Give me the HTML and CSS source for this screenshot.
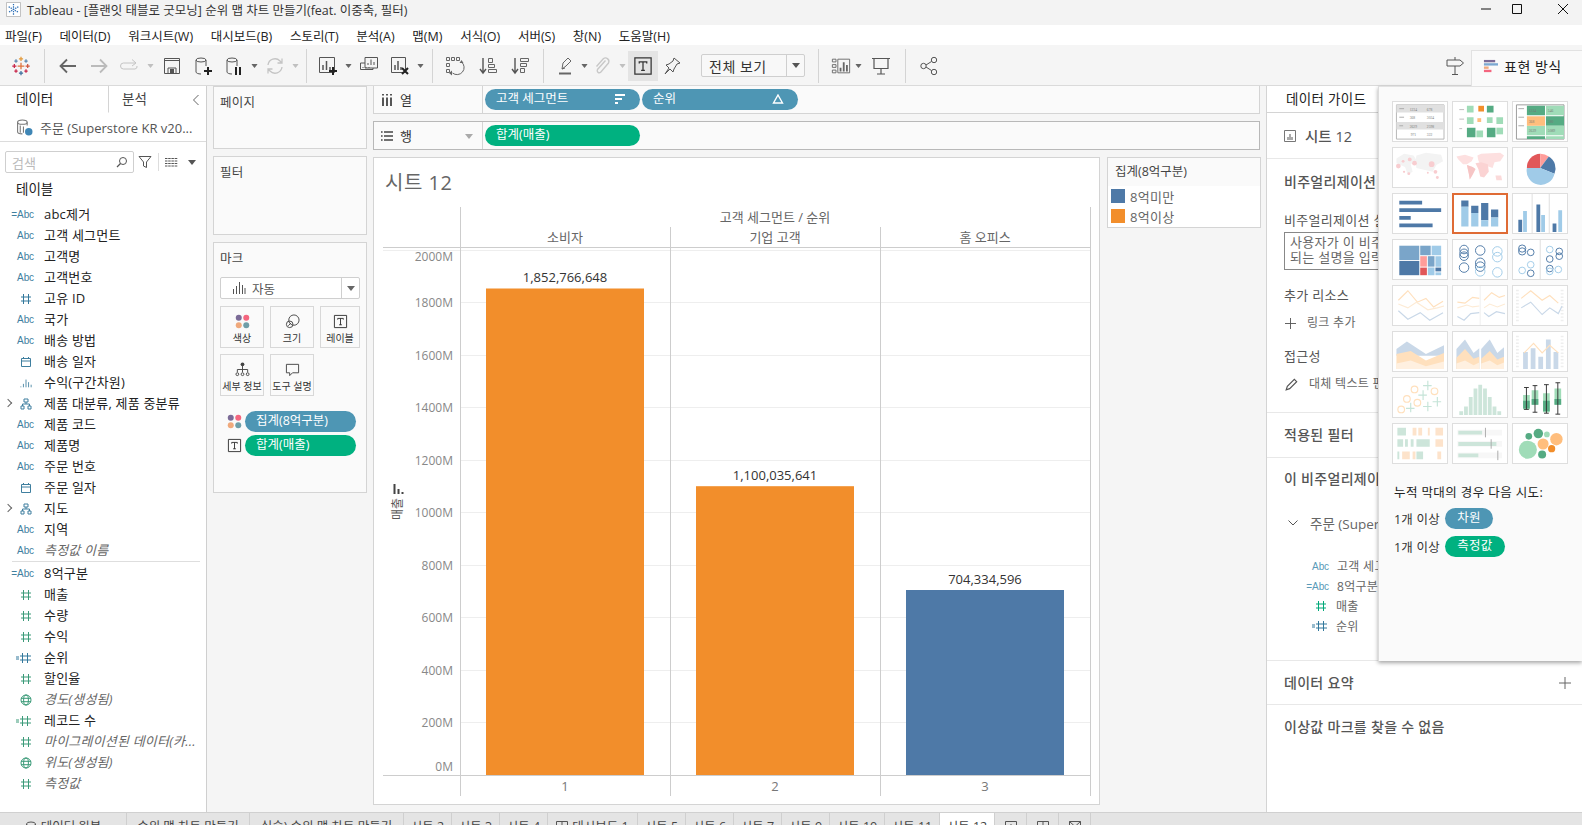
FILE: index.html
```html
<!DOCTYPE html>
<html lang="ko">
<head>
<meta charset="utf-8">
<title>Tableau</title>
<link rel="stylesheet" href="styles.css">
</head>
<body>
<svg class="defs" width="0" height="0" aria-hidden="true">
  <symbol id="i-hash" viewBox="0 0 12 12"><path d="M3.500 1v10M8.500 1v10M1 4h10M1 8h10" fill="none" stroke="currentColor" stroke-width="1"/></symbol>
  <symbol id="i-calc" viewBox="0 0 16 12"><path d="M6.500 1v10M11.500 1v10M4 4h11M4 8h11M0 5h3M0 7h3" fill="none" stroke="currentColor"/></symbol>
  <symbol id="i-cal" viewBox="0 0 12 12"><path d="M1.500 2.500h9v8h-9zM1.500 5h9M3.500 1v2M8.500 1v2" fill="none" stroke="currentColor"/></symbol>
  <symbol id="i-bin" viewBox="0 0 14 12"><path d="M1 10v1M4 7v4M7 2v9M10 5v6M13 8v3" stroke="currentColor" fill="none"/></symbol>
  <symbol id="i-hier" viewBox="0 0 12 12"><path d="M4 1h4v3H4zM1 8h3v3H1zM8 8h3v3H8zM6 4v2M2.500 8V6h7v2" fill="none" stroke="currentColor"/></symbol>
  <symbol id="i-globe" viewBox="0 0 12 12"><g fill="none" stroke="currentColor"><circle cx="6" cy="6" r="5"/><ellipse cx="6" cy="6" rx="2.400" ry="5"/><path d="M1 4.300h10M1 7.700h10"/></g></symbol>
  <symbol id="i-t" viewBox="0 0 16 16"><path d="M1.500 1.500h13v13h-13z" fill="none" stroke="currentColor"/><path d="M5 6V4.700h6V6M8 4.700v7M6.500 11.500h3" fill="none" stroke="currentColor"/></symbol>
  <symbol id="i-dots" viewBox="0 0 16 16"><circle cx="4" cy="4" r="3.200" fill="#7b6b97"/><circle cx="12" cy="4" r="3.200" fill="#f4667f"/><circle cx="4" cy="12" r="3.200" fill="#f0a97c"/><circle cx="12" cy="12" r="3.200" fill="#6f9ea8"/></symbol>
  <symbol id="i-tab" viewBox="0 0 24 24"><g fill="none" stroke-width="1.500"><path d="M12 8v8M8 12h8" stroke="#e0743c"/><path d="M12 1v5M9.500 3.500h5" stroke="#e39a3a"/><path d="M12 18v5M9.500 20.500h5" stroke="#3d6f9e"/><path d="M4 9.500v5M1.500 12h5" stroke="#c7264a"/><path d="M20 9.500v5M17.500 12h5" stroke="#d0553e"/><path d="M6 4v4M4 6h4M18 4v4M16 6h4" stroke="#5b87ad"/><path d="M6 16v4M4 18h4M18 16v4M16 18h4" stroke="#c7264a"/></g></symbol>
  <symbol id="i-car" viewBox="0 0 8 5"><path d="M0 0h8L4 5z" fill="currentColor"/></symbol>
</svg>

<header class="titlebar">
  <svg class="app-ico" viewBox="0 0 16 16"><path d="M.5.500h15v15H.5z" fill="#fff" stroke="#bcbcbc"/><path d="M8 2v12M2.800 5l10.400 6M13.200 5L2.800 11" stroke="#2a6db5" stroke-width="1.300" stroke-dasharray="1.500 1"/></svg>
  <span class="title-text">Tableau - [플랜잇 태블로 굿모닝] 순위 맵 차트 만들기(feat. 이중축, 필터)</span>
  <div class="winctl">
    <svg viewBox="0 0 12 12"><path d="M1 6h10" stroke="#111"/></svg>
    <svg viewBox="0 0 12 12"><path d="M1.500 1.500h9v9h-9z" fill="none" stroke="#111"/></svg>
    <svg viewBox="0 0 12 12"><path d="M1 1l10 10M11 1L1 11" stroke="#111"/></svg>
  </div>
</header>

<nav class="menubar">
  <span>파일(F)</span><span>데이터(D)</span><span>워크시트(W)</span><span>대시보드(B)</span><span>스토리(T)</span><span>분석(A)</span><span>맵(M)</span><span>서식(O)</span><span>서버(S)</span><span>창(N)</span><span>도움말(H)</span>
</nav>

<div class="toolbar">
  <div class="tb-logo"><svg class="ico-18" viewBox="0 0 24 24"><use href="#i-tab"/></svg></div>
  <i class="sep"></i>
  <div class="tb-group pad-7">
    <button class="tb"><svg viewBox="0 0 20 20"><path d="M18 10H3M9 3.500L2.500 10 9 16.500" fill="none" stroke="#666" stroke-width="1.800"/></svg></button>
    <button class="tb"><svg viewBox="0 0 20 20"><path d="M2 10h15M11 3.500l6.500 6.500-6.500 6.500" fill="none" stroke="#bbb" stroke-width="1.800"/></svg></button>
    <button class="tb"><svg viewBox="0 0 20 20"><path d="M15 7H3.500a2.500 2.500 0 0 0 0 6H15a2.500 2.500 0 0 0 2-3M12 3.500L16 7l-4 3" fill="none" stroke="#c4c4c4"/></svg></button>
    <span class="car light"><svg viewBox="0 0 8 5"><use href="#i-car"/></svg></span>
    <button class="tb"><svg viewBox="0 0 20 20"><path d="M2.500 2.500h15v15h-15zM2.500 4.500h15M6 17v-5h8v5" fill="none" stroke="#555"/><path d="M8 13h4v4H8z" fill="#555"/></svg></button>
    <button class="tb"><svg viewBox="0 0 20 20"><g fill="none" stroke="#555"><ellipse cx="8" cy="4" rx="5" ry="2"/><path d="M3 4v12c0 1 2 2 5 2M13 4v6"/></g><path d="M15 11v8M11 15h8" stroke="#222" stroke-width="2"/></svg></button>
    <button class="tb"><svg viewBox="0 0 20 20"><g fill="none" stroke="#555"><ellipse cx="8" cy="4" rx="5" ry="2"/><path d="M3 4v12c0 1 2 2 5 2M13 4v6"/></g><path d="M12 11v8M16 11v8" stroke="#222" stroke-width="2"/></svg></button>
    <span class="car w10"><svg viewBox="0 0 8 5"><use href="#i-car"/></svg></span>
    <button class="tb"><svg viewBox="0 0 20 20"><path d="M3 9a7 7 0 0 1 12-4l2 2M17 11a7 7 0 0 1-12 4l-2-2M17 2.500V7h-4.500M3 17.500V13h4.500" fill="none" stroke="#c4c4c4" stroke-width="1.300"/></svg></button>
    <span class="car light"><svg viewBox="0 0 8 5"><use href="#i-car"/></svg></span>
  </div>
  <i class="sep ml-5"></i>
  <div class="tb-group pad-5">
    <button class="tb"><svg viewBox="0 0 20 20"><path d="M1.500 1.500h15v15h-15z" fill="none" stroke="#555"/><path d="M5 14V9M8.500 14V5M12 14v-3" stroke="#555" stroke-width="1.500"/><path d="M15 11v8M11 15h8" stroke="#222" stroke-width="2"/></svg></button>
    <span class="car w10"><svg viewBox="0 0 8 5"><use href="#i-car"/></svg></span>
    <button class="tb"><svg viewBox="0 0 20 20"><path d="M6 1.500h12.500V12H6zM1.500 7H6M1.500 7v6.500H14V12" fill="none" stroke="#555"/><path d="M9 9V7M12 9V3.500M15 9V6M4 11v1M7 11v1M10 11v1" stroke="#555"/></svg></button>
    <button class="tb"><svg viewBox="0 0 20 20"><path d="M1.500 1.500h14v15h-14z" fill="none" stroke="#555"/><path d="M5 14V9M8 14V5M11 14v-3" stroke="#555" stroke-width="1.500"/><path d="M12 12l6 6M18 12l-6 6" stroke="#222" stroke-width="2"/></svg></button>
    <span class="car w10"><svg viewBox="0 0 8 5"><use href="#i-car"/></svg></span>
  </div>
  <i class="sep ml-7"></i>
  <div class="tb-group pad-6">
    <button class="tb"><svg viewBox="0 0 20 20"><g fill="none" stroke="#666"><path d="M1.500 1.500h3v3h-3zM6.500 1.500h3v3h-3zM11.500 1.500h3v3h-3zM1.500 7.500h3v3h-3zM1.500 13.500h3v3h-3z"/><path d="M16.500 6a7 7 0 0 1-9 11"/></g><path d="M7 14.500v5l-3-2.500zM14.500 7h4l-2-3z" fill="#666"/></svg></button>
    <button class="tb ml-2"><svg viewBox="0 0 20 20"><path d="M5 2v14M2 13l3 4 3-4" fill="none" stroke="#555" stroke-width="1.400"/><path d="M10.500 2.500h4v4h-4zM10.500 8.500h6v3h-6zM10.500 13.500h8v3h-8z" fill="none" stroke="#666"/></svg></button>
    <button class="tb ml-1"><svg viewBox="0 0 20 20"><path d="M5 2v14M2 13l3 4 3-4" fill="none" stroke="#555" stroke-width="1.400"/><path d="M10.500 2.500h8v3h-8zM10.500 7.500h6v3h-6zM10.500 12.500h4v4h-4z" fill="none" stroke="#666"/></svg></button>
  </div>
  <i class="sep ml-8"></i>
  <div class="tb-group pad-8">
    <button class="tb n"><svg viewBox="0 0 20 20"><path d="M8 13l1-6 5-5 3 3-5 5zM8 13l3-1" fill="none" stroke="#666" transform="translate(-2 0)"/><path d="M3 17.500h12" stroke="#666" stroke-width="2"/></svg></button>
    <span class="car w8"><svg viewBox="0 0 8 5"><use href="#i-car"/></svg></span>
    <button class="tb n"><svg viewBox="0 0 20 20"><path d="M13.500 3.500l-8 9a2.200 2.200 0 0 0 3 3l8-9.500a3.500 3.500 0 0 0-5-4.500l-7 8" transform="translate(0 1)" fill="none" stroke="#c8c8c8" stroke-width="1.400"/></svg></button>
    <span class="car w12 light"><svg viewBox="0 0 8 5"><use href="#i-car"/></svg></span>
    <button class="tb active"><svg viewBox="0 0 16 16"><use href="#i-t"/></svg></button>
    <button class="tb n"><svg viewBox="0 0 20 20"><path d="M12 2l6 5-3 1-3 5-1 3-3-3-5 5 4-6-3-3 3-1 4-3z" fill="none" stroke="#555"/></svg></button>
  </div>
  <div class="fit-select"><span class="fit-text">전체 보기</span><span class="fit-btn"><svg viewBox="0 0 8 5"><use href="#i-car"/></svg></span></div>
  <i class="sep ml-13"></i>
  <div class="tb-group pad-9">
    <button class="tb s"><svg viewBox="0 0 22 20"><path d="M1.500 2.500h4v3h-4zM1.500 8.500h4v3h-4zM1.500 14.500h4v3h-4zM7.500 2.500h13v15h-13z" fill="none" stroke="#666"/><path d="M10.500 16v-4M14 16V6M17.500 16V9" stroke="#666" stroke-width="2"/></svg></button>
    <span class="car w8"><svg viewBox="0 0 8 5"><use href="#i-car"/></svg></span>
    <button class="tb ml-3"><svg viewBox="0 0 20 20"><path d="M1 2.500h18M3 2.500v10h14v-10M10 12.500v5M6 18h8" fill="none" stroke="#555" stroke-width="1.200"/></svg></button>
  </div>
  <i class="sep ml-9"></i>
  <div class="tb-group pad-7">
    <button class="tb"><svg viewBox="0 0 20 20"><g fill="none" stroke="#555"><circle cx="4.500" cy="10" r="2.700"/><circle cx="15" cy="4" r="2.700"/><circle cx="15" cy="16" r="2.700"/><path d="M7 9l5.500-3.500M7 11l5.500 3.500"/></g></svg></button>
  </div>
  <div class="tb-right">
    <svg class="sign" viewBox="0 0 20 20"><path d="M10 1v3M2 4h13l3.500 3L15 10H2zM10 10v8M7 18.500h6" fill="none" stroke="#555"/></svg>
    <div class="showme-tab">
      <svg viewBox="0 0 16 16"><path d="M1 1h12v2.500H1z" fill="#7b6b97"/><path d="M1 4.500h15V7H1z" fill="#7ba8d1"/><path d="M1 8h5v2.500H1z" fill="#f0a97c"/><path d="M1 11.500h8V14H1z" fill="#f4667f"/></svg>
      <span>표현 방식</span>
    </div>
  </div>
</div>

<main class="main">
  <aside class="data-pane">
    <div class="pane-tabs">
      <div class="ptab on">데이터</div>
      <div class="ptab">분석</div>
      <svg class="collapse" viewBox="0 0 8 12"><path d="M6.500 1L1.500 6l5 5" fill="none" stroke="#666"/></svg>
    </div>
    <div class="source">
      <svg viewBox="0 0 16 16"><g fill="none" stroke="#777"><ellipse cx="6" cy="3" rx="4.500" ry="2"/><path d="M1.500 3v9c0 1 2 2 4.500 2M10.500 3v3"/><path d="M4 6v7M7 7v6"/></g><circle cx="12" cy="12" r="3.500" fill="#3f86b5"/></svg>
      <span>주문 (Superstore KR v20...</span>
    </div>
    <div class="search-row">
      <div class="search"><span>검색</span><svg viewBox="0 0 12 12"><circle cx="7" cy="5" r="3.500" fill="none" stroke="#555"/><path d="M4.500 7.500L1 11" stroke="#555" stroke-width="1.300"/></svg></div>
      <svg class="s-filter" viewBox="0 0 14 14"><path d="M1 1.500h12L8.500 7v5.500l-3-1.500V7z" fill="none" stroke="#555"/></svg>
      <i class="s-sep"></i>
      <svg class="s-list" viewBox="0 0 13 11"><path d="M0 1.500h13M0 4h13M0 6.500h13M0 9h13" stroke="#555" stroke-dasharray="2.500 .7"/></svg>
      <svg class="s-car" viewBox="0 0 8 5"><use href="#i-car"/></svg>
    </div>
    <div class="tables-h">테이블</div>
    <ul class="fields">
      <li><b class="abc">=Abc</b><span>abc제거</span></li>
      <li><b class="abc">Abc</b><span>고객 세그먼트</span></li>
      <li><b class="abc">Abc</b><span>고객명</span></li>
      <li><b class="abc">Abc</b><span>고객번호</span></li>
      <li><svg class="fi teal"><use href="#i-hash"/></svg><span>고유 ID</span></li>
      <li><b class="abc">Abc</b><span>국가</span></li>
      <li><b class="abc">Abc</b><span>배송 방법</span></li>
      <li><svg class="fi blue"><use href="#i-cal"/></svg><span>배송 일자</span></li>
      <li><svg class="fi blue"><use href="#i-bin"/></svg><span>수익(구간차원)</span></li>
      <li><em class="chev"></em><svg class="fi blue"><use href="#i-hier"/></svg><span>제품 대분류, 제품 중분류</span></li>
      <li><b class="abc">Abc</b><span>제품 코드</span></li>
      <li><b class="abc">Abc</b><span>제품명</span></li>
      <li><b class="abc">Abc</b><span>주문 번호</span></li>
      <li><svg class="fi blue"><use href="#i-cal"/></svg><span>주문 일자</span></li>
      <li><em class="chev"></em><svg class="fi blue"><use href="#i-hier"/></svg><span>지도</span></li>
      <li><b class="abc">Abc</b><span>지역</span></li>
      <li class="gen"><b class="abc">Abc</b><span>측정값 이름</span></li>
    </ul>
    <hr class="f-sep">
    <ul class="fields">
      <li><b class="abc">=Abc</b><span>8억구분</span></li>
      <li><svg class="fi green"><use href="#i-hash"/></svg><span>매출</span></li>
      <li><svg class="fi green"><use href="#i-hash"/></svg><span>수량</span></li>
      <li><svg class="fi green"><use href="#i-hash"/></svg><span>수익</span></li>
      <li><svg class="fi wide teal"><use href="#i-calc"/></svg><span>순위</span></li>
      <li><svg class="fi green"><use href="#i-hash"/></svg><span>할인율</span></li>
      <li class="gen"><svg class="fi green"><use href="#i-globe"/></svg><span>경도(생성됨)</span></li>
      <li><svg class="fi wide green"><use href="#i-calc"/></svg><span>레코드 수</span></li>
      <li class="gen"><svg class="fi green"><use href="#i-hash"/></svg><span>마이그레이션된 데이터(카...</span></li>
      <li class="gen"><svg class="fi green"><use href="#i-globe"/></svg><span>위도(생성됨)</span></li>
      <li class="gen"><svg class="fi green"><use href="#i-hash"/></svg><span>측정값</span></li>
    </ul>
  </aside>

  <section class="side-cards">
    <div class="card pages"><h3>페이지</h3></div>
    <div class="card filters"><h3>필터</h3></div>
    <div class="card marks">
      <h3>마크</h3>
      <div class="mark-type">
        <svg class="fi-gray" viewBox="0 0 14 14"><path d="M1.500 8v5M4.500 5v8M7.500 1v12M10.500 4v9M13 7v6" stroke="#555" fill="none"/></svg>
        <span>자동</span>
        <i class="mt-btn"><svg viewBox="0 0 8 5"><use href="#i-car"/></svg></i>
      </div>
      <div class="mark-btns">
        <div class="mbtn"><svg viewBox="0 0 16 16"><use href="#i-dots"/></svg><span>색상</span></div>
        <div class="mbtn"><svg viewBox="0 0 16 16"><g fill="none" stroke="#444"><circle cx="9.500" cy="6.500" r="5.500"/><circle cx="5" cy="11" r="3.500"/><path d="M3.500 12.500l3-3"/></g></svg><span>크기</span></div>
        <div class="mbtn narrow"><svg viewBox="0 0 16 16"><use href="#i-t"/></svg><span>레이블</span></div>
        <div class="mbtn"><svg viewBox="0 0 16 16"><g fill="none" stroke="#444"><path d="M8 4v4M2.500 11V8h11v3M8 8v3"/><circle cx="2.500" cy="13" r="1.500"/><circle cx="8" cy="13" r="1.500"/><circle cx="13.500" cy="13" r="1.500"/></g><circle cx="8" cy="2.500" r="2" fill="#444"/></svg><span>세부 정보</span></div>
        <div class="mbtn"><svg viewBox="0 0 16 16"><path d="M1.500 2.500h13v9H8l-3 3v-3H1.500z" fill="none" stroke="#444"/></svg><span>도구 설명</span></div>
      </div>
      <div class="mark-pill"><svg viewBox="0 0 16 16"><use href="#i-dots"/></svg><span class="pill blue-p">집계(8억구분)</span></div>
      <div class="mark-pill"><svg viewBox="0 0 16 16"><use href="#i-t"/></svg><span class="pill green-p">합계(매출)</span></div>
    </div>
  </section>

  <section class="center">
    <div class="shelf">
      <div class="shelf-label"><svg class="sh-ico" viewBox="0 0 12 12"><path d="M2 0v1.500M2 3.500V12M6 0v1.500M6 3.500V12M10 0v1.500M10 3.500V12" stroke="#444" stroke-width="1.800"/></svg><span>열</span></div>
      <div class="shelf-pills">
        <span class="pill blue-p pw-155"><span>고객 세그먼트</span><svg class="pill-ico" viewBox="0 0 12 10"><path d="M1 1h10M1 5h7M1 9h3" stroke="#fff" stroke-width="2"/></svg></span>
        <span class="pill blue-p pw-156"><span>순위</span><svg class="pill-ico" viewBox="0 0 12 10"><path d="M6 1l4.500 8h-9z" fill="none" stroke="#fff" stroke-width="1.400"/></svg></span>
      </div>
    </div>
    <div class="shelf rows">
      <div class="shelf-label"><svg class="sh-ico" viewBox="0 0 12 12"><path d="M0 2h1.600M3 2h9M0 6h1.600M3 6h9M0 10h1.600M3 10h9" stroke="#444" stroke-width="1.400"/></svg><span>행</span><svg class="sh-car" viewBox="0 0 8 5"><use href="#i-car"/></svg></div>
      <div class="shelf-pills"><span class="pill green-p pw-155"><span>합계(매출)</span></span></div>
    </div>
    <div class="work">
      <div class="view">
        <svg class="chart" viewBox="374 158 725 647" width="725" height="647">
          <text class="c-title" x="385" y="190">시트 12</text>
          <g class="grid">
            <path d="M383 250.500H1090M461 302.500H1090M461 355.500H1090M461 407.500H1090M461 460.500H1090M461 512.500H1090M461 565.500H1090M461 617.500H1090M461 670.500H1090M461 722.500H1090"/>
          </g>
          <g class="rules">
            <path d="M460.500 207V796M670.500 227V796M880.500 227V796M1090.500 207V796M383 247.500H1090.500M383 775.500H1090.500"/>
          </g>
          <rect x="486" y="288.500" width="158" height="486.500" fill="#f28e2b"/>
          <rect x="696" y="486.200" width="158" height="288.800" fill="#f28e2b"/>
          <rect x="906" y="590" width="158" height="185" fill="#4e79a7"/>
          <g class="c-val">
            <text x="565" y="282">1,852,766,648</text>
            <text x="775" y="480">1,100,035,641</text>
            <text x="985" y="584">704,334,596</text>
          </g>
          <g class="c-head">
            <text x="775" y="222">고객 세그먼트 / 순위</text>
            <text x="565" y="242">소비자</text>
            <text x="775" y="242">기업 고객</text>
            <text x="985" y="242">홈 오피스</text>
          </g>
          <g class="c-axis">
            <text x="453" y="261">2000M</text>
            <text x="453" y="307">1800M</text>
            <text x="453" y="360">1600M</text>
            <text x="453" y="412">1400M</text>
            <text x="453" y="465">1200M</text>
            <text x="453" y="517">1000M</text>
            <text x="453" y="570">800M</text>
            <text x="453" y="622">600M</text>
            <text x="453" y="675">400M</text>
            <text x="453" y="727">200M</text>
            <text x="453" y="771">0M</text>
          </g>
          <g class="c-num">
            <text x="565" y="791">1</text>
            <text x="775" y="791">2</text>
            <text x="985" y="791">3</text>
          </g>
          <path d="M394.500 484v10M398.500 489v5M402.500 492v2" stroke="#444" stroke-width="2"/>
          <text class="c-ytitle" transform="translate(402 520) rotate(-90)">매출</text>
        </svg>
      </div>
      <div class="legend">
        <div class="lg-head">집계(8억구분)</div>
        <div class="lg-row"><i class="sw s-blue"></i><span>8억미만</span></div>
        <div class="lg-row"><i class="sw s-orange"></i><span>8억이상</span></div>
      </div>
    </div>
  </section>

  <aside class="guide">
    <div class="g-tab">데이터 가이드</div>
    <div class="g-sheet"><svg viewBox="0 0 12 12"><path d="M.5.500h11v11H.5z" fill="none" stroke="#777"/><path d="M3 10V7h2V4h2v3h2v3z" fill="#aaa"/></svg><span>시트 12</span></div>
    <div class="g-sec viz">
      <h4>비주얼리제이션 설명</h4>
      <div class="g-label">비주얼리제이션 설명</div>
      <div class="g-area">사용자가 이 비주얼리제이션을 이해하는 데 도움이<br>되는 설명을 입력하세요</div>
      <div class="g-label mt-14">추가 리소스</div>
      <div class="g-link"><svg viewBox="0 0 12 12"><path d="M6 0v12M0 6h12" stroke="#555"/></svg><span>링크 추가</span></div>
      <div class="g-label mt-13">접근성</div>
      <div class="g-link"><svg class="big" viewBox="0 0 12 12"><path d="M1 11l1-3 6-6 2 2-6 6z" fill="none" stroke="#555"/></svg><span>대체 텍스트 편집</span></div>
    </div>
    <div class="g-sec single"><h4>적용된 필터</h4></div>
    <div class="g-sec used">
      <h4>이 비주얼리제이션에 사용된 데이터</h4>
      <div class="g-src"><svg viewBox="0 0 10 6"><path d="M.5.500L5 5 9.500.500" fill="none" stroke="#555"/></svg><span>주문 (Superstore KR v20...</span></div>
      <ul class="g-fields">
        <li><b class="abc">Abc</b><span>고객 세그먼트</span></li>
        <li><b class="abc">=Abc</b><span>8억구분</span></li>
        <li><svg class="fi g2"><use href="#i-hash"/></svg><span>매출</span></li>
        <li><svg class="fi wide teal"><use href="#i-calc"/></svg><span>순위</span></li>
      </ul>
    </div>
    <div class="g-sec single flexed"><h4>데이터 요약</h4><svg viewBox="0 0 12 12"><path d="M6 0v12M0 6h12" stroke="#666"/></svg></div>
    <div class="g-sec last"><h4>이상값 마크를 찾을 수 없음</h4></div>
  </aside>

  <div class="showme">
    <div class="sm-grid">
      <svg class="th" viewBox="0 0 55 41"><path d="M3 3h50v36H3z" fill="#fff" stroke="#b5b5b5"/><path d="M3 3h50v8H3zM3 21h50v8H3z" fill="#e0e0e0"/><path d="M6 7h5M6 16h5M6 25h4" stroke="#aaa"/><g class="tiny"><text x="17" y="9">1234</text><text x="35" y="9">678</text><text x="17" y="18">368</text><text x="35" y="18">3034</text><text x="17" y="27">2629</text><text x="35" y="27">2598</text><text x="18" y="36">971</text><text x="35" y="36">322</text></g></svg>
      <svg class="th" viewBox="0 0 55 41"><path d="M6 8h5M6 18h5M6 28h3" stroke="#bbb"/><path d="M14 4h7v7h-7zM38 5h3v3h-3zM14 16h7v7h-7zM35 16h6v6h-6zM45 16h7v7h-7zM24 30h7v7h-7z" fill="#a0dcb8"/><path d="M26 4h6v6h-6z" fill="#f28e2b"/><path d="M35 4h7v7h-7zM14 27h9v10h-9zM35 27h9v10h-9z" fill="#55ab83"/><path d="M25 17h4v4h-4z" fill="#ffbe7d"/><path d="M45 27h7v7h-7z" fill="#a0dcb8"/></svg>
      <svg class="th" viewBox="0 0 55 41"><path d="M3 3h50v36H3z" fill="#fff" stroke="#999"/><path d="M5 7h6M5 16h6M5 25h6" stroke="#aaa"/><path d="M14 4h19v10H14zM34 15h19v10H34zM14 36h19v3H14z" fill="#55ab83"/><path d="M34 4h19v10H34zM14 25h19v10H14zM34 25h19v10H34zM34 36h19v3H34z" fill="#a0dcb8"/><path d="M14 15h19v10H14z" fill="#ffbe7d"/><g class="tiny"><text x="16" y="11">1234</text><text x="36" y="11">546</text><text x="16" y="22">368</text><text x="36" y="22">380</text><text x="16" y="32">2629</text><text x="36" y="32">5089</text></g></svg>
      <svg class="th" viewBox="0 0 55 41"><path d="M3 11l8-5 10 2 3 5-6 4 2 8-5 3-3-8-9-4zM24 8l10-3 16 2 2 7-7 4-4 7-8-2-9-2-1-7z" fill="#f3f3f3"/><g fill="#f8cdd0"><circle cx="5" cy="19" r="2.500"/><circle cx="10" cy="14" r="1.500"/><circle cx="17" cy="12" r="2"/><circle cx="22" cy="16" r="2.500"/><circle cx="11" cy="25" r="1.200"/><circle cx="40" cy="17" r="3"/><circle cx="44" cy="25" r="2"/><circle cx="46" cy="31" r="1.500"/><circle cx="16" cy="27" r="1.500"/><circle cx="36" cy="26" r="1"/></g></svg>
      <svg class="th" viewBox="0 0 55 41"><path d="M3 9l9-2 9 3-2 4-5 3-4 0-5-5zM14 18l6 2 3 2-3 6-3 5-1-6zM25 8l4-2 20-1 4 3-4 6-6 1-2 6-6-2-7-1-2-5z" fill="#fde0e0"/><path d="M23 16l6-1 7 2 1 8-5 6-4-1-2-8z" fill="#fbd3d3"/><path d="M44 29h6l1 5-6 0z" fill="#fbdada"/><path d="M14 18l6 2 3 2-3 6-3 5-1-6z" fill="#f6c5c5"/></svg>
      <svg class="th" viewBox="0 0 55 41"><path d="M28 21V6A14.500 14.500 0 0 0 14 21z" fill="#e15759"/><path d="M28 6a14.500 14.500 0 0 1 9 3L28 21z" fill="#ff9d9a"/><path d="M37 9a14.500 14.500 0 0 1 6 18L28 21z" fill="#4e79a7"/><path d="M43 27A14.500 14.500 0 0 1 14 21h14z" fill="#a0cbe8"/></svg>
      <svg class="th" viewBox="0 0 55 41"><path d="M6 7h24v4H6zM6 15h44v4H6zM6 23h12v4H6zM6 31h35v4H6z" fill="#4e79a7"/></svg>
      <svg class="th sel" viewBox="0 0 55 41"><path d="M7 6h8v7H7zM18 12h8v8h-8zM29 9h8v19h-8zM40 16h8v9h-8z" fill="#4e79a7"/><path d="M7 13h8v22H7zM18 20h8v15h-8zM29 28h8v7h-8zM40 25h8v10h-8z" fill="#a0cbe8"/></svg>
      <svg class="th" viewBox="0 0 55 41"><path d="M19.500 0v41M37.500 0v41" stroke="#ddd"/><path d="M5 27h4v13H5zM24 11h4v29h-4zM41 31h4v9h-4z" fill="#4e79a7"/><path d="M10 18h4v22h-4zM29 22h4v18h-4zM47 17h4v23h-4z" fill="#a0cbe8"/></svg>
      <svg class="th" viewBox="0 0 55 41"><path d="M6 6h21v15H6z" fill="#7aa5c9"/><path d="M28 6h11v10H28z" fill="#7aa5c9"/><path d="M40 6h10v10H40z" fill="#a0cbe8"/><path d="M6 22h21v15H6z" fill="#4e79a7"/><path d="M28 17h7v11h-7z" fill="#ff9d9a"/><path d="M36 17h7v11h-7z" fill="#7aa5c9"/><path d="M44 17h6v11h-6zM36 29h7v8h-7z" fill="#a0cbe8"/><path d="M28 29h7v8h-7z" fill="#e15759"/><path d="M44 29h6v4h-6z" fill="#4e79a7"/><path d="M44 34h6v3h-6z" fill="#a0cbe8"/></svg>
      <svg class="th" viewBox="0 0 55 41"><g fill="none" stroke="#4e79a7" stroke-width="1"><circle cx="11" cy="10" r="4.500"/><circle cx="11" cy="14" r="4.500"/><circle cx="11" cy="17" r="4.500"/><circle cx="28" cy="11" r="5"/><circle cx="11" cy="29" r="5"/><circle cx="28" cy="24" r="5"/><circle cx="28" cy="28" r="5"/></g><g fill="none" stroke="#a0cbe8" stroke-width="1"><circle cx="46" cy="12" r="5"/><circle cx="46" cy="18" r="5"/><circle cx="28" cy="33" r="5"/><circle cx="46" cy="34" r="5"/></g></svg>
      <svg class="th" viewBox="0 0 55 41"><path d="M28 0v41" stroke="#ddd"/><g fill="none" stroke="#4e79a7"><circle cx="9" cy="9" r="3.800"/><circle cx="9" cy="12" r="3.800"/><circle cx="18" cy="13" r="3.500"/><circle cx="18" cy="35" r="3.500"/><circle cx="38" cy="20" r="3.500"/><circle cx="48" cy="12" r="3.500"/><circle cx="48" cy="17" r="3.500"/><circle cx="38" cy="30" r="3.500"/></g><g fill="none" stroke="#a0cbe8"><circle cx="9" cy="32" r="3.500"/><circle cx="18" cy="26" r="3.500"/><circle cx="38" cy="10" r="3.500"/><circle cx="38" cy="33" r="3.500"/><circle cx="47" cy="31" r="3.500"/></g></svg>

      <svg class="th" viewBox="0 0 55 41"><g fill="none" stroke-width="1.200"><path d="M5 15l10-10 10 12 9-4 8 9 10-6" stroke="#ffe0bd"/><path d="M5 19l10 4 9-6 12 8 10-2 7-2" stroke="#fdebd5"/><path d="M5 26l10 9 13-7 10 8 14-8" stroke="#c9d8e8"/></g></svg>
      <svg class="th" viewBox="0 0 55 41"><path d="M28 0v41" stroke="#eee"/><g fill="none" stroke-width="1.200"><path d="M4 17l8 1 8-6 7 1M32 15l8-8 8 5 6-2" stroke="#ffe0bd"/><path d="M4 23l10-3 6 2 7-1M32 23l6-4 8 3 8-3" stroke="#fdebd5"/><path d="M4 32l7 4 7-7 9-1M32 28l5 4 8-5 9 2" stroke="#c9d8e8"/></g></svg>
      <svg class="th" viewBox="0 0 55 41"><path d="M51 4v34M4 4v34" stroke="#eee" stroke-dasharray="1.500 2" stroke-width="3"/><g fill="none" stroke-width="1.200"><path d="M8 13l10-8 12 10 8-5 9 8" stroke="#ffe0bd"/><path d="M8 23l10-6 12 13 8-7 9 6 4-8" stroke="#c9d8e8"/></g></svg>
      <svg class="th" viewBox="0 0 55 41"><path d="M3 18l11-8 20 13 19-9v11H3z" fill="#c9d8e8"/><path d="M3 23l15-3 16 10 19-8v17H3z" fill="#ffe0bd"/><path d="M3 33l15-3 16 6 19-5v8H3z" fill="#fff0e0"/></svg>
      <svg class="th" viewBox="0 0 55 41"><path d="M3 18l9-10 9 14 6-5v22H3zM29 18l9-10 8 14 7-6v23H29z" fill="#c9d8e8"/><path d="M3 27l9-9 9 10 6-2v13H3zM29 28l9-8 8 9 7-3v13H29z" fill="#ffe0bd"/><path d="M3 33l9-3 9 5 6-3v7H3zM29 33l9-3 8 5 7-3v7H29z" fill="#fff0e0"/></svg>
      <svg class="th" viewBox="0 0 55 41"><path d="M51 4v34M4 4v34" stroke="#eee" stroke-dasharray="1.500 2" stroke-width="3"/><path d="M10 21h5v18h-5zM18 17h5v22h-5zM26 26h5v13h-5zM34 8h5v31h-5zM42 21h5v18h-5z" fill="#c9d8e8"/><path d="M11 22l10-10 9 10 8-8 9 8" fill="none" stroke="#ffe0bd" stroke-width="1.200"/></svg>
      <svg class="th" viewBox="0 0 55 41"><g fill="none" stroke="#ffe0bd" stroke-width="1.200"><circle cx="22" cy="12" r="3.500"/><circle cx="14" cy="22" r="3.500"/><circle cx="8" cy="33" r="3.500"/><circle cx="25" cy="26" r="3.500"/><circle cx="43" cy="14" r="3.500"/></g><path d="M36 3v10M31 8h9M31 13v10M26 18h9M18 26v10M13 32h9M36 25v10M31 30h9M46 20v10M41 25h9" stroke="#c5e4d8" stroke-width="1.200"/></svg>
      <svg class="th" viewBox="0 0 55 41"><path d="M6 35h4v4H6zM11 30h4v9h-4zM16 20h4v19h-4zM21 11h4v28h-4zM26 7h4v32h-4zM31 11h4v28h-4zM36 20h4v19h-4zM41 30h4v9h-4zM46 35h4v4h-4z" fill="#cde5da"/></svg>
      <svg class="th" viewBox="0 0 55 41"><path d="M10 18h7v15h-7zM19 13h7v15h-7zM31 16h7v20h-7zM43 11h7v17h-7z" fill="#a0dcb8"/><path d="M10 24h7v8h-7zM19 22h7v6h-7zM31 24h7v11h-7zM43 22h7v6h-7z" fill="#55ab83"/><path d="M13.500 10v23M11 10h5M11 33h5M22.500 8v28M20 8h5M20 36h5M34.500 7v30M32 7h5M32 37h5M46.500 5v33M44 5h5M44 38h5" fill="none" stroke="#333" stroke-width="1"/></svg>
      <svg class="th" viewBox="0 0 55 41"><path d="M4 4h9v8H4zM4 16h6v8H4zM12 16h3v8h-3zM18 16h3v8h-3zM4 29h2v8H4zM24 29h7v8h-7zM24 16h14v8H24z" fill="#cde5da"/><path d="M20 4h4v8h-4zM26 4h4v8h-4zM36 4h2v8h-2zM44 4h8v8h-8zM44 16h8v8h-8zM9 29h8v8H9zM20 29h3v8h-3zM46 29h4v8h-4z" fill="#fde3cb"/></svg>
      <svg class="th" viewBox="0 0 55 41"><path d="M4 6h47v6H4zM4 18h47v6H4zM4 30h47v6H4z" fill="#f7f7f7"/><path d="M5 7h25v4H5zM5 19h40v4H5zM5 31h21v4H5z" fill="#cde5da"/><path d="M33.500 4v10M39.500 16v10M46.500 28v10" stroke="#aaa" stroke-width="1"/></svg>
      <svg class="th" viewBox="0 0 55 41"><circle cx="15" cy="27" r="9.500" fill="#a0dcb8"/><circle cx="16" cy="13" r="3.500" fill="#55ab83"/><circle cx="26" cy="10" r="5" fill="#55ab83"/><circle cx="35" cy="11" r="3" fill="#a0dcb8"/><circle cx="45" cy="16" r="6.500" fill="#ffbe7d"/><circle cx="31" cy="21" r="5.800" fill="#ffbe7d"/><circle cx="40" cy="26" r="3.800" fill="#f28e2b"/><circle cx="30" cy="32" r="4.200" fill="#55ab83"/></svg>
    </div>
    <div class="sm-hint">누적 막대의 경우 다음 시도:</div>
    <div class="sm-req"><span>1개 이상</span><span class="pill blue-p sm-pill w48">차원</span></div>
    <div class="sm-req"><span>1개 이상</span><span class="pill green-p sm-pill w60">측정값</span></div>
  </div>
</main>

<footer class="tabbar">
  <div class="tab t-src"><svg viewBox="0 0 12 12"><ellipse cx="6" cy="3" rx="4.500" ry="2" fill="none" stroke="#555"/><path d="M1.500 3v8M10.500 3v8" stroke="#555"/></svg>데이터 원본</div>
  <div class="tab t-a">순위 맵 차트 만들기</div>
  <div class="tab t-b">실습) 순위 맵 차트 만들기</div>
  <div class="tab t-n">시트 2</div>
  <div class="tab t-n">시트 3</div>
  <div class="tab t-n">시트 4</div>
  <div class="tab t-d"><svg viewBox="0 0 12 12"><path d="M.5.500h11v11H.5zM.5 5h11M6 .500V11" fill="none" stroke="#555"/></svg>대시보드 1</div>
  <div class="tab t-n">시트 5</div>
  <div class="tab t-n">시트 6</div>
  <div class="tab t-n">시트 7</div>
  <div class="tab t-n">시트 9</div>
  <div class="tab t-m">시트 10</div>
  <div class="tab t-m">시트 11</div>
  <div class="tab t-m on">시트 12</div>
  <div class="tab t-i"><svg viewBox="0 0 12 12"><path d="M.5.500h11v11H.5zM6 3v6" fill="none" stroke="#555"/></svg></div>
  <div class="tab t-i"><svg viewBox="0 0 12 12"><path d="M.5.500h11v11H.5zM.5 5h11M6 .500V11" fill="none" stroke="#555"/></svg></div>
  <div class="tab t-i"><svg viewBox="0 0 12 12"><path d="M.5.500h11v11H.5zM.5.500l5.500 5 5.500-5" fill="none" stroke="#555"/></svg></div>
</footer>
</body>
</html>
```

FILE: styles.css
```css
* { box-sizing: border-box; }
html, body { margin: 0; height: 100%; }
body {
  width: 1582px; height: 825px; overflow: hidden;
  display: flex; flex-direction: column;
  font-family: "Open Sans", "Noto Sans CJK KR", sans-serif;
  font-size: 13px; color: #222; background: #f5f5f5;
}
ul { list-style: none; margin: 0; padding: 0; }
h3, h4 { margin: 0; font-weight: 400; }
button { border: 0; background: none; padding: 0; font: inherit; }
.defs { position: absolute; }

/* title + menu */
.titlebar { height: 25px; flex: none; background: #f3f3f3; display: flex; align-items: center; padding: 0 0 7px 6px; }
.app-ico { width: 15px; height: 15px; margin-right: 6px; }
.title-text { font-size: 12.500px; color: #333; }
.winctl { margin-left: auto; display: flex; }
.winctl svg { width: 12px; height: 12px; margin: 0 13px 0 20px; display: block; }
.winctl svg:nth-child(1) { margin-right: 19px; }
.winctl svg:nth-child(2) { margin-right: 17px; margin-left: 0; }
.winctl svg:nth-child(3) { margin-left: 17px; }
.menubar { height: 20px; flex: none; background: #fff; display: flex; align-items: center; padding-left: 5px; gap: 17.700px; font-size: 12.500px; color: #222; }

/* toolbar */
.toolbar { height: 41px; flex: none; background: #f5f5f5; display: flex; align-items: center; position: relative; border-bottom: 1px solid #dadada; padding-top: 1px; }
.tb-logo { width: 44px; display: flex; justify-content: center; padding-right: 3px; }
.ico-18 { width: 20px; height: 20px; }
.sep { display: block; width: 1px; height: 34px; background: #d4d4d4; flex: none; }
.tb-group { display: flex; align-items: center; height: 30px; }
.pad-5 { padding-left: 5px; } .pad-6 { padding-left: 6px; } .pad-7 { padding-left: 7px; } .pad-8 { padding-left: 8px; } .pad-9 { padding-left: 9px; }
.ml-1 { margin-left: 1px; } .ml-2 { margin-left: 2px; } .ml-3 { margin-left: 3px; } .ml-5 { margin-left: 5px; } .ml-7 { margin-left: 7px; } .ml-8 { margin-left: 8px; } .ml-9 { margin-left: 9px; } .ml-13 { margin-left: 13px; }
.tb { width: 31px; height: 30px; display: flex; align-items: center; justify-content: center; flex: none; color: #333; }
.tb.n { width: 28px; } .tb.s { width: 26px; }
.tb svg { width: 20px; height: 20px; }
.tb.active { width: 30px; background: #e4e4e4; }
.car { width: 11px; display: flex; justify-content: center; color: #666; flex: none; }
.car.light { color: #c0c0c0; }
.car.w8 { width: 8px; } .car.w10 { width: 10px; } .car.w12 { width: 12px; }
.car svg { width: 7px; height: 4px; }
.fit-select { margin-left: 15px; width: 104px; height: 23px; border: 1px solid #cfcfcf; border-radius: 2px; background: #f8f8f8; display: flex; align-items: center; flex: none; }
.fit-text { flex: 1; padding-left: 7px; font-size: 14px; color: #333; letter-spacing: .5px; }
.fit-btn { width: 18px; height: 100%; border-left: 1px solid #cfcfcf; display: flex; align-items: center; justify-content: center; color: #555; }
.fit-btn svg { width: 8px; height: 5px; }
.tb-right { margin-left: auto; display: flex; align-items: flex-end; height: 100%; }
.sign { width: 20px; height: 20px; margin: 0 6px 9px 0; align-self: flex-end; }
.showme-tab { width: 111px; height: 36px; background: #fafafa; border: 1px solid #e2e2e2; border-bottom: 0; border-right: 0; display: flex; align-items: center; padding: 0 0 5px 11px; gap: 6px; margin-bottom: -1px; position: relative; z-index: 3; font-size: 14px; color: #222; letter-spacing: .5px; }
.showme-tab svg { width: 15px; height: 15px; }

/* main */
.main { flex: 1; min-height: 0; display: flex; position: relative; }

.data-pane { width: 207px; flex: none; background: #fff; border-right: 1px solid #cfcfcf; }
.pane-tabs { display: flex; height: 27px; position: relative; border-bottom: 1px solid #d4d4d4; }
.ptab { height: 27px; line-height: 26px; font-size: 13.500px; padding-left: 16px; width: 109px; background: #fff; color: #222; }
.ptab.on { border-bottom: 1px solid #fff; border-right: 1px solid #d4d4d4; }
.ptab:nth-child(2) { padding-left: 13px; width: 97px; color: #444; }
.collapse { position: absolute; left: 192px; top: 8px; width: 8px; height: 12px; }
.source { height: 29px; display: flex; align-items: center; padding-left: 16px; border-bottom: 1px solid #dcdcdc; color: #555; font-size: 13px; }
.source svg { width: 17px; height: 17px; margin-right: 7px; }
.search-row { display: flex; align-items: center; padding: 9px 0 0 5px; }
.search { width: 129px; height: 22px; border: 1px solid #cfcfcf; border-radius: 2px; display: flex; align-items: center; justify-content: space-between; padding: 0 5px 0 6px; color: #bbb; font-size: 13px; }
.search svg { width: 12px; height: 12px; }
.s-filter { width: 14px; height: 14px; margin-left: 4px; }
.s-sep { width: 1px; height: 18px; background: #ddd; margin: 0 6px; }
.s-list { width: 13px; height: 11px; }
.s-car { width: 8px; height: 5px; margin-left: 10px; color: #555; }
.tables-h { height: 31px; line-height: 33px; padding-left: 16px; font-size: 13.500px; color: #222; }
.fields li { height: 21px; display: flex; align-items: center; padding-left: 14px; position: relative; white-space: nowrap; font-size: 13px; color: #222; letter-spacing: .2px; }
.fields li > span { position: absolute; left: 44px; top: 0; line-height: 20px; }
.fields li.gen > span { font-style: italic; color: #666; }
.abc { width: 20px; display: flex; justify-content: flex-end; font-weight: 400; font-size: 10px; letter-spacing: -.1px; color: #3f7f9f; font-family: "Liberation Sans", sans-serif; white-space: nowrap; }
.fi { width: 12px; height: 12px; margin-left: 6px; display: block; }
.fi.wide { width: 16px; margin-left: 2px; }
.teal { color: #33789c; } .blue { color: #3f7f9f; } .green { color: #3a9a78; } .g2 { color: #00a878; }
.chev { position: absolute; left: 5px; top: 7px; width: 6px; height: 6px; border-top: 1px solid #666; border-right: 1px solid #666; transform: rotate(45deg); }
.f-sep { border: 0; height: 1px; background: #dedede; margin: 0 6px 1px 12px; }

.side-cards { width: 154px; margin-left: 6px; flex: none; display: flex; flex-direction: column; gap: 7px; }
.card { background: #fafafa; border: 1px solid #d4d4d4; padding: 8px 6px; }
.card h3 { font-size: 12.500px; color: #444; line-height: 16px; letter-spacing: .3px; }
.pages { height: 63px; } .filters { height: 79px; }
.marks { height: 251px; padding-top: 8px; }
.mark-type { margin-top: 10px; height: 22px; width: 140px; border: 1px solid #cfcfcf; border-radius: 2px; background: #fff; display: flex; align-items: center; padding-left: 11px; font-size: 12.500px; color: #555; }
.fi-gray { width: 14px; height: 14px; margin-right: 6px; }
.mt-btn { margin-left: auto; width: 18px; height: 100%; border-left: 1px solid #cfcfcf; display: flex; align-items: center; justify-content: center; color: #666; }
.mt-btn svg { width: 8px; height: 5px; }
.mark-btns { display: flex; flex-wrap: wrap; gap: 6px; margin-top: 7px; width: 142px; }
.mbtn { width: 44px; height: 42px; border: 1px solid #d8d8d8; background: #fafafa; display: flex; flex-direction: column; align-items: center; padding-top: 7px; font-size: 10px; line-height: 13px; color: #333; white-space: nowrap; }
.mbtn.narrow { width: 40px; }
.mbtn svg { width: 15px; height: 15px; margin-bottom: 3px; flex: none; }
.mark-pill { display: flex; align-items: center; margin-top: 3px; padding-left: 7px; }
.mark-btns + .mark-pill { margin-top: 15px; }
.mark-pill svg { width: 15px; height: 15px; margin-right: 3px; color: #333; }
.mark-pill .pill { width: 111px; }

.pill { height: 21px; border-radius: 11px; color: #fff; font-size: 12.500px; line-height: 17px; padding: 0 11px 2px; display: flex; align-items: center; justify-content: space-between; white-space: nowrap; flex: none; }
.blue-p { background: #4e96b4; } .green-p { background: #00b180; }
.pw-155 { width: 155px; } .pw-156 { width: 156px; }
.pill-ico { width: 12px; height: 10px; margin-right: 3px; }

.center { width: 887px; flex: none; margin-left: 6px; display: flex; flex-direction: column; }
.shelf { height: 28px; display: flex; flex: none; background: #fafafa; border: 1px solid #d4d4d4; border-top: 0; }
.shelf.rows { height: 29px; margin-top: 7px; border: 1px solid #b8b8b8; }
.shelf-label { width: 109px; flex: none; border-right: 1px solid #d4d4d4; display: flex; align-items: center; padding-left: 7px; position: relative; font-size: 13px; color: #333; background: #fafafa; }
.sh-ico { width: 12px; height: 12px; margin-right: 7px; }
.sh-car { position: absolute; right: 9px; top: 12px; width: 8px; height: 5px; color: #aaa; }
.shelf-pills { display: flex; align-items: center; gap: 2px; padding-left: 2px; }
.work { display: flex; gap: 7px; margin-top: 7px; flex: 1; min-height: 0; padding-bottom: 7px; }
.view { width: 727px; flex: none; background: #fff; border: 1px solid #d4d4d4; }
.chart { display: block; }
.grid path { stroke: #eee; fill: none; }
.rules path { stroke: #cdcdcd; fill: none; }
.c-title { font-size: 20px; fill: #666; letter-spacing: .5px; }
.c-val text { font-size: 13px; fill: #333; text-anchor: middle; }
.c-head text { font-size: 13px; fill: #666; text-anchor: middle; }
.c-axis text { font-size: 12px; fill: #888; text-anchor: end; }
.c-num text { font-size: 13px; fill: #777; text-anchor: middle; }
.c-ytitle { font-size: 12px; fill: #555; }
.legend { width: 154px; height: 71px; flex: none; background: #fff; border: 1px solid #d4d4d4; }
.lg-head { height: 28px; line-height: 28px; background: #fafafa; padding-left: 7px; font-size: 12.500px; color: #444; }
.lg-row { height: 20px; display: flex; align-items: center; padding-left: 3px; color: #666; font-size: 13px; letter-spacing: .3px; }
.sw { width: 14px; height: 14px; margin-right: 5px; }
.s-blue { background: #4e79a7; } .s-orange { background: #f28e2b; }

.guide { width: 316px; margin-left: 6px; flex: none; background: #fff; border-left: 1px solid #d4d4d4; color: #555; overflow: hidden; }
.g-tab { height: 27px; line-height: 26px; padding-left: 19px; border-bottom: 1px solid #d4d4d4; font-size: 13.500px; color: #222; letter-spacing: .3px; }
.g-sheet { height: 46px; display: flex; align-items: center; padding-left: 17px; border-bottom: 1px solid #e8e8e8; font-size: 14.500px; font-weight: 500; gap: 9px; }
.g-sheet svg { width: 12px; height: 12px; }
.g-sec { padding: 0 0 0 17px; border-bottom: 1px solid #e8e8e8; white-space: nowrap; }
.g-sec h4 { font-size: 14px; font-weight: 500; line-height: 20px; color: #555; letter-spacing: .3px; }
.viz { height: 254px; padding-top: 13px; }
.viz > *, .used > * { width: 94px; overflow: hidden; white-space: nowrap; }
.g-label { margin-top: 19px; font-size: 13px; line-height: 18px; color: #555; letter-spacing: .3px; }
.viz .mt-14 { margin-top: 16px; }
.viz .mt-13 { margin-top: 15px; }
.g-area { margin-top: 3px; height: 38px; border: 1px solid #888; border-right: 0; padding: 2px 5px; font-size: 13px; line-height: 15px; color: #666; letter-spacing: .3px; }
.g-link { display: flex; align-items: center; gap: 11px; margin-top: 10px; font-size: 12px; color: #666; line-height: 18px; padding-left: 1px; letter-spacing: .3px; }
.g-link svg { width: 11px; height: 11px; flex: none; }
.g-link svg.big { width: 14px; height: 14px; margin-right: -1px; }
.single { height: 45px; padding-top: 12px; }
.used { height: 203px; padding-top: 11px; }
.used .g-src { width: 90px; display: flex; align-items: center; gap: 12px; margin: 24px 0 0 4px; font-size: 13.500px; color: #666; }
.g-src svg { width: 10px; height: 6px; flex: none; }
.g-fields { margin-top: 23px; padding-left: 25px; }
.g-fields li { height: 20px; display: flex; align-items: center; font-size: 12px; color: #666; letter-spacing: .3px; }
.g-fields .abc { width: 20px; margin-right: 8px; color: #5a9ab8; flex: none; }
.g-fields .fi { margin: 0 9px 0 6px; flex: none; }
.g-fields .fi.wide { margin: 0 8px 0 3px; }
.single.flexed { height: 44px; display: flex; justify-content: space-between; padding-right: 11px; }
.flexed svg { width: 12px; height: 12px; margin-top: 4px; }
.last { border: 0; padding-top: 12px; }

.showme { position: absolute; left: 1378px; top: 0; width: 204px; height: 575px; background: #fafafa; border-left: 1px solid #dcdcdc; border-top: 1px solid #e2e2e2; box-shadow: 0 2px 4px rgba(0,0,0,.35); padding: 14px 0 0 13px; z-index: 2; }
.sm-grid { display: grid; grid-template-columns: repeat(3, 55.500px); grid-auto-rows: 41px; column-gap: 4.500px; row-gap: 5px; }
.th { width: 55.500px; height: 41px; background: #fff; border: 1px solid #dedede; display: block; box-sizing: border-box; }
.th.sel { border: 2px solid #df6b35; }
.tiny text { font-size: 3.800px; fill: #777; font-family: "Liberation Serif", serif; }
.sm-hint { margin: 20px 0 0 2px; font-size: 12.500px; line-height: 18px; color: #222; letter-spacing: .4px; }
.sm-req { display: flex; align-items: center; gap: 5px; margin: 7px 0 0 2px; font-size: 12.500px; color: #333; letter-spacing: .2px; }
.sm-hint + .sm-req { margin-top: 6px; }
.sm-pill { justify-content: center; padding: 0 0 2px; }
.w48 { width: 48px; } .w60 { width: 60px; }

/* tabs */
.tabbar { height: 13px; flex: none; background: #e4e4e4; border-top: 1px solid #d0d0d0; display: flex; overflow: hidden; }
.tab { flex: none; height: 28px; padding-top: 4px; font-size: 12.500px; line-height: 20px; color: #444; border-right: 1px solid #cfcfcf; text-align: center; white-space: nowrap; background: #e4e4e4; }
.tab svg { width: 12px; height: 12px; margin-right: 4px; vertical-align: -2px; }
.t-src { width: 127px; } .t-a { width: 123px; } .t-b { width: 154px; } .t-n { width: 48px; }
.t-d { width: 90px; } .t-m { width: 55px; } .t-i { width: 32px; padding-left: 4px; }
.tab.on { background: #fff; }
```
